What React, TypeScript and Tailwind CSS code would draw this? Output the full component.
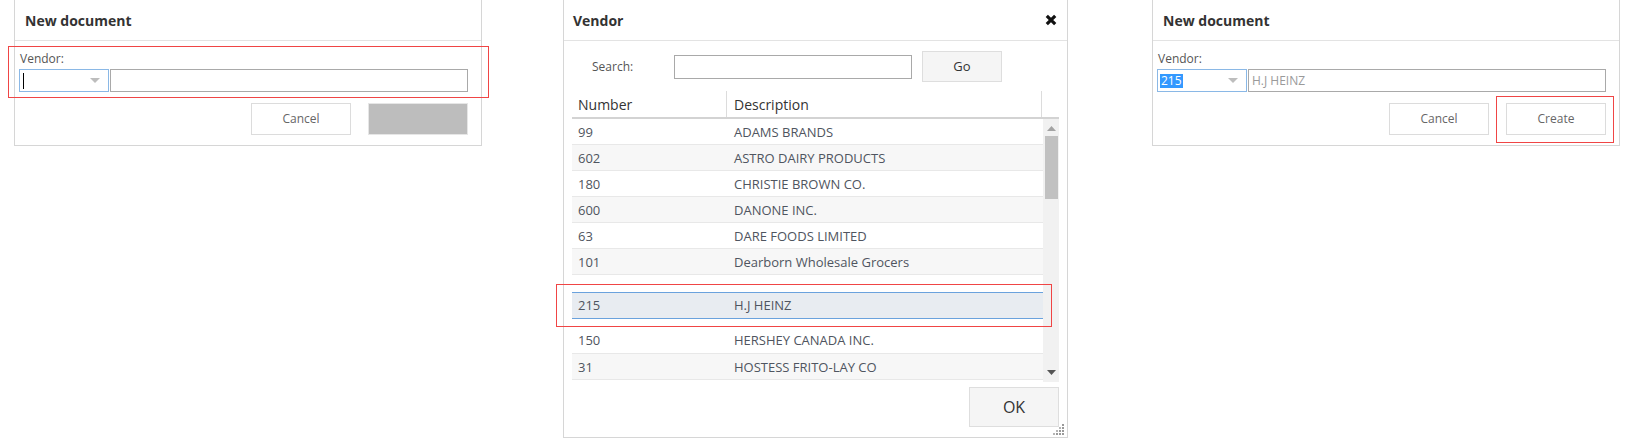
import React from "react";

const rows = [
  { num: "99", desc: "ADAMS BRANDS" },
  { num: "602", desc: "ASTRO DAIRY PRODUCTS" },
  { num: "180", desc: "CHRISTIE BROWN CO." },
  { num: "600", desc: "DANONE INC." },
  { num: "63", desc: "DARE FOODS LIMITED" },
  { num: "101", desc: "Dearborn Wholesale Grocers" },
];

const Caret = () => (
  <svg width="10" height="6" viewBox="0 0 10 6" className="shrink-0">
    <path d="M0 0 L10 0 L5 5 Z" fill="#bdbdbd" />
  </svg>
);

const NewDocument = ({ filled }: { filled?: boolean }) => (
  <div className="w-[468px] h-[146px] border-x border-b border-[#d6d6d6] bg-white flex flex-col">
    <div className="h-[41px] border-b border-[#e3e3e3] flex items-center pl-[10px]">
      <h2 className="text-[14px] font-bold text-[#333]">New document</h2>
    </div>
    <div className="flex flex-col pl-[4px] pr-[13px] pt-[10px]">
      <label className="text-[12px] leading-[16px] text-[#555] pl-[1px]">Vendor:</label>
      <div className="flex mt-[2px] h-[23px]">
        <div className="w-[90px] h-full border border-[#8ab8e6] flex items-center justify-between pl-[2px] pr-[8px]">
          {filled ? (
            <span className="bg-[#3399ff] text-white text-[12px] leading-[14px] px-[1px]">215</span>
          ) : (
            <span className="w-[1px] h-[16px] bg-black ml-[1px]" />
          )}
          <Caret />
        </div>
        <div className="ml-[1px] flex-1 h-full border border-[#a9a9a9] flex items-center pl-[3px] text-[12px] text-[#9a9a9a]">
          {filled ? "H.J HEINZ" : ""}
        </div>
      </div>
      <div className="flex justify-end gap-[17px] mt-[11px]">
        <button className="w-[100px] h-[32px] border border-[#dcdcdc] bg-white text-[12px] text-[#666]">
          Cancel
        </button>
        {filled ? (
          <button className="w-[100px] h-[32px] border border-[#dcdcdc] bg-white text-[12px] text-[#666]">
            Create
          </button>
        ) : (
          <div className="w-[100px] h-[32px] border border-[#e6e6e6] bg-[#bdbdbd]" />
        )}
      </div>
    </div>
  </div>
);

const VendorPicker = () => (
  <div className="w-[505px] h-[438px] border-x border-b border-[#d6d6d6] bg-white flex flex-col relative">
    <div className="h-[41px] border-b border-[#e3e3e3] flex items-center justify-between pl-[9px] pr-[10px]">
      <h2 className="text-[14px] font-bold text-[#333]">Vendor</h2>
      <svg width="12" height="12" viewBox="0 0 12 12">
        <path d="M1.8 1.8 L10.2 10.2 M10.2 1.8 L1.8 10.2" stroke="#111" strokeWidth="3.2" />
      </svg>
    </div>
    <div className="flex items-center pl-[28px] pt-[10px] pb-[6px]">
      <span className="w-[82px] text-[12px] text-[#555]">Search:</span>
      <div className="w-[238px] h-[24px] border border-[#a9a9a9]" />
      <button className="ml-[10px] w-[80px] h-[31px] border border-[#dedede] bg-[#f5f5f5] text-[13px] text-[#333]">
        Go
      </button>
    </div>
    <div className="ml-[8px] w-[487px]">
      <div className="h-[31px] flex items-end border-b-2 border-[#d3d3d3] text-[14px] text-[#333]">
        <div className="w-[155px] h-[26px] border-r border-[#dcdcdc] flex items-center pl-[6px]">Number</div>
        <div className="w-[315px] h-[26px] border-r border-[#dcdcdc] flex items-center pl-[7px]">Description</div>
      </div>
      <div className="flex h-[263px]">
        <div className="w-[471px] flex flex-col text-[13px] text-[#4f5560]">
          {rows.map((r, i) => (
            <div
              key={r.num}
              className={`h-[26px] flex items-center pt-[2px] border-b border-[#e8e8e8] ${i % 2 ? "bg-[#f7f7f7]" : "bg-white"}`}
            >
              <span className="w-[155px] pl-[6px]">{r.num}</span>
              <span className="pl-[7px]">{r.desc}</span>
            </div>
          ))}
          <div className="h-[17px]" />
          <div className="h-[27px] flex items-center pt-[1px] border-y border-[#6aa2dd] bg-[#e8ecf1]">
            <span className="w-[155px] pl-[6px]">215</span>
            <span className="pl-[7px]">H.J HEINZ</span>
          </div>
          <div className="h-[35px] flex items-center pt-[10px] border-b border-[#e8e8e8] bg-white">
            <span className="w-[155px] pl-[6px]">150</span>
            <span className="pl-[7px]">HERSHEY CANADA INC.</span>
          </div>
          <div className="h-[26px] flex items-center pt-[2px] border-b border-[#e8e8e8] bg-[#f7f7f7]">
            <span className="w-[155px] pl-[6px]">31</span>
            <span className="pl-[7px]">HOSTESS FRITO-LAY CO</span>
          </div>
        </div>
        <div className="w-[16px] h-full bg-[#f1f1f1] flex flex-col items-center">
          <svg width="9" height="5" viewBox="0 0 9 5" className="mt-[7px]">
            <path d="M0 5 L9 5 L4.5 0 Z" fill="#a3a3a3" />
          </svg>
          <div className="mt-[5px] w-[13px] h-[63px] bg-[#c1c1c1]" />
          <div className="flex-1" />
          <svg width="9" height="5" viewBox="0 0 9 5" className="mb-[7px]">
            <path d="M0 0 L9 0 L4.5 5 Z" fill="#555" />
          </svg>
        </div>
      </div>
      <div className="flex justify-end mt-[5px]">
        <button className="w-[90px] h-[40px] border border-[#dedede] bg-[#f5f5f5] text-[16px] text-[#333]">
          OK
        </button>
      </div>
    </div>
    <svg width="12" height="12" viewBox="0 0 12 12" className="absolute right-[2px] bottom-[1px]">
      <rect x="9" y="0" width="2" height="2" fill="#9a9a9a" />
      <rect x="9" y="3" width="2" height="2" fill="#9a9a9a" />
      <rect x="6" y="3" width="2" height="2" fill="#b5b5b5" />
      <rect x="9" y="6" width="2" height="2" fill="#9a9a9a" />
      <rect x="6" y="6" width="2" height="2" fill="#9a9a9a" />
      <rect x="3" y="6" width="2" height="2" fill="#b5b5b5" />
      <rect x="9" y="9" width="2" height="2" fill="#9a9a9a" />
      <rect x="6" y="9" width="2" height="2" fill="#9a9a9a" />
      <rect x="3" y="9" width="2" height="2" fill="#9a9a9a" />
      <rect x="0" y="9" width="2" height="2" fill="#b5b5b5" />
    </svg>
  </div>
);

const App = () => {
  return (
    <div className="relative w-[1625px] h-[445px] bg-white flex items-start font-['Open_Sans',sans-serif]">
      <div className="ml-[14px]">
        <NewDocument />
      </div>
      <div className="ml-[81px]">
        <VendorPicker />
      </div>
      <div className="ml-[84px]">
        <NewDocument filled />
      </div>

      {/* red annotation boxes */}
      <div className="absolute left-[8px] top-[46px] w-[481px] h-[52px] border-[1.5px] border-[#f04545]" />
      <div className="absolute left-[556px] top-[284px] w-[496px] h-[43px] border-[1.5px] border-[#f04545]" />
      <div className="absolute left-[1496px] top-[96px] w-[118px] h-[47px] border-[1.5px] border-[#f04545]" />
    </div>
  );
};

export default App;
